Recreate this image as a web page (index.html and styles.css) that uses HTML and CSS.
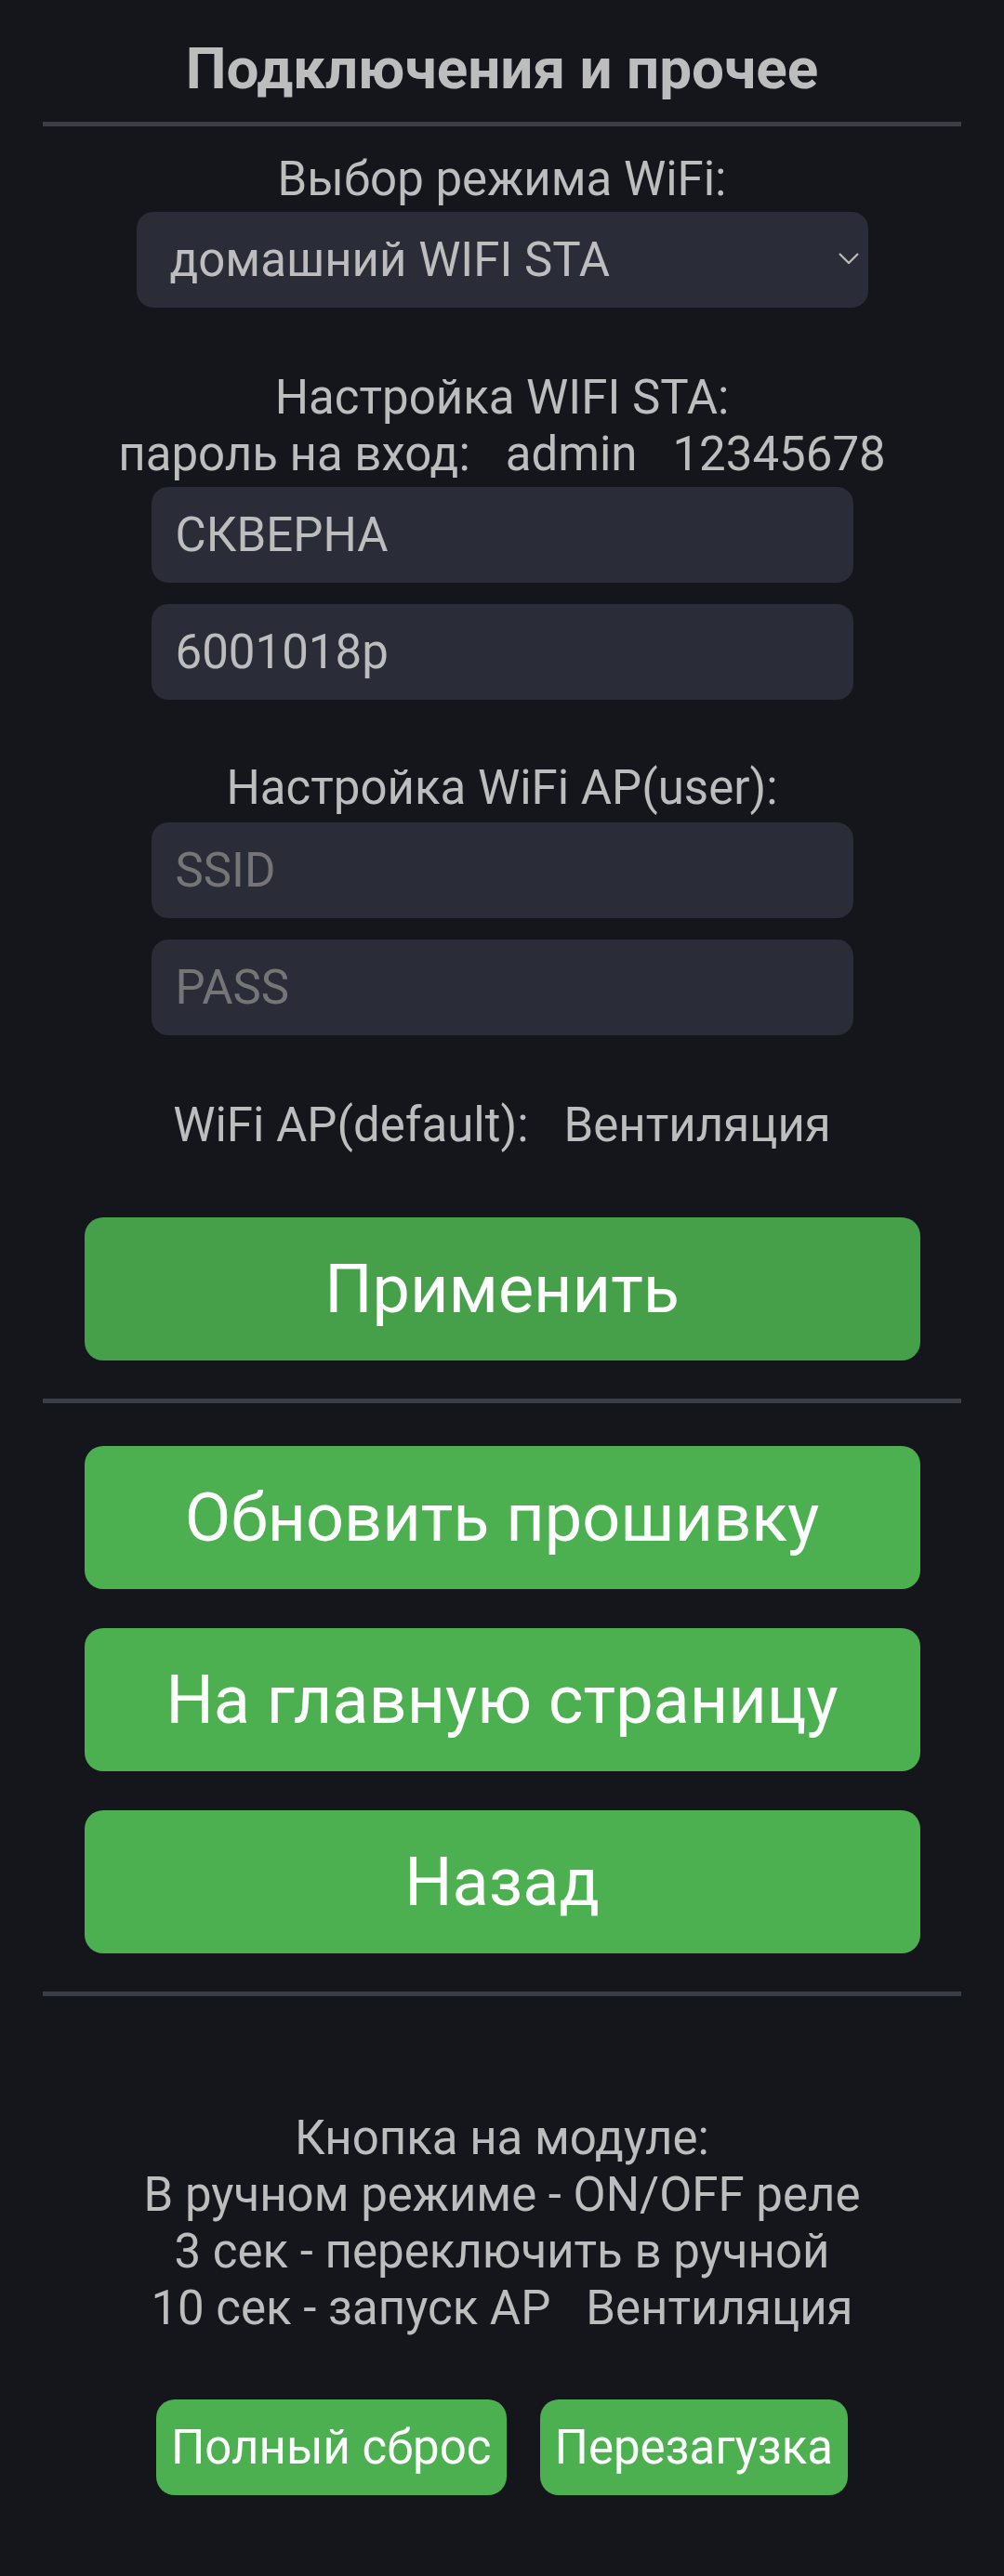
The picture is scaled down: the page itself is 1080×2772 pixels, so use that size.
FILE: index.html
```html
<!DOCTYPE html>
<html lang="ru">
<head>
<meta charset="utf-8">
<title>Подключения и прочее</title>
<link rel="stylesheet" href="styles.css">
</head>
<body>
<main class="page">
  <h1 class="title">Подключения и прочее</h1>
  <div class="divider divider-top"></div>

  <div class="label label-mode">Выбор режима WiFi:</div>
  <div class="select">
    <span class="select-text">домашний WIFI STA</span>
    <svg class="chevron" width="22" height="12" viewBox="0 0 22 12"><path d="M1 1 L11 11 L21 1" fill="none" stroke="#bdbdbd" stroke-width="2.2"/></svg>
  </div>

  <div class="label label-sta">Настройка WIFI STA:<br>пароль на вход:&nbsp;&nbsp; admin&nbsp;&nbsp; 12345678</div>
  <div class="field field-first"><span class="value">СКВЕРНА</span></div>
  <div class="field field-next"><span class="value">6001018p</span></div>

  <div class="label label-ap">Настройка WiFi AP(user):</div>
  <div class="field field-first-ap"><span class="placeholder">SSID</span></div>
  <div class="field field-next"><span class="placeholder">PASS</span></div>

  <div class="label label-default">WiFi AP(default):&nbsp;&nbsp; Вентиляция</div>

  <div class="btn btn-apply">Применить</div>
  <div class="divider divider-mid"></div>

  <div class="btn btn-first">Обновить прошивку</div>
  <div class="btn btn-next">На главную страницу</div>
  <div class="btn btn-next">Назад</div>
  <div class="divider divider-mid"></div>

  <div class="label label-info">Кнопка на модуле:<br>В ручном режиме - ON/OFF реле<br>3 сек - переключить в ручной<br>10 сек - запуск AP&nbsp;&nbsp; Вентиляция</div>

  <div class="small-row">
    <div class="btn-small">Полный сброс</div>
    <div class="btn-small">Перезагузка</div>
  </div>
</main>
</body>
</html>
```

FILE: styles.css
```css
html, body {
  margin: 0;
  padding: 0;
  background: #14161b;
}
body {
  font-family: Roboto, "Noto Sans", "Liberation Sans", sans-serif;
  color: #bdbdbd;
  min-height: 2772px;
}
.page {
  width: 988px;
  margin: 0 auto;
  padding-top: 39px;
  display: flex;
  flex-direction: column;
  align-items: center;
}
.title {
  margin: 0;
  font-size: 62px;
  line-height: 70px;
  font-weight: 700;
  color: #bdbdbd;
  text-align: center;
}
.divider {
  align-self: stretch;
  height: 5px;
  background: #3a3f47;
}
.divider-top { margin-top: 22px; }
.divider-mid { margin-top: 41px; }

.label {
  font-size: 51px;
  line-height: 61px;
  text-align: center;
  color: #bdbdbd;
}
.label-mode { margin-top: 26px; }
.label-sta { margin-top: 66px; }
.label-ap { margin-top: 64px; }
.label-default { margin-top: 66px; }
.label-info { margin-top: 122px; }

.select {
  margin-top: 5px;
  width: 787px;
  height: 103px;
  box-sizing: border-box;
  background: #2a2d37;
  border-radius: 18px;
  display: flex;
  align-items: center;
  justify-content: space-between;
  padding: 0 10px 0 36px;
}
.select-text {
  font-size: 51px;
  color: #bdbdbd;
}
.chevron { display: block; margin-top: -4px; }

.field {
  width: 755px;
  height: 103px;
  box-sizing: border-box;
  background: #2a2d37;
  border-radius: 18px;
  display: flex;
  align-items: center;
  padding: 0 26px;
  font-size: 51px;
}
.field-first { margin-top: 5px; }
.field-first-ap { margin-top: 7px; }
.field-next { margin-top: 23px; }
.value { color: #bdbdbd; }
.placeholder { color: #757575; }

.btn {
  width: 899px;
  height: 154px;
  border-radius: 20px;
  background: #4caf50;
  color: #ffffff;
  font-size: 72px;
  display: flex;
  align-items: center;
  justify-content: center;
}
.btn-apply { margin-top: 69px; background: #45a049; }
.btn-first { margin-top: 46px; }
.btn-next { margin-top: 42px; }

.small-row {
  margin-top: 68px;
  display: flex;
  gap: 36px;
  justify-content: center;
}
.btn-small {
  height: 103px;
  padding: 0 16px;
  border-radius: 20px;
  background: #4caf50;
  color: #ffffff;
  font-size: 51px;
  display: flex;
  align-items: center;
}
```
